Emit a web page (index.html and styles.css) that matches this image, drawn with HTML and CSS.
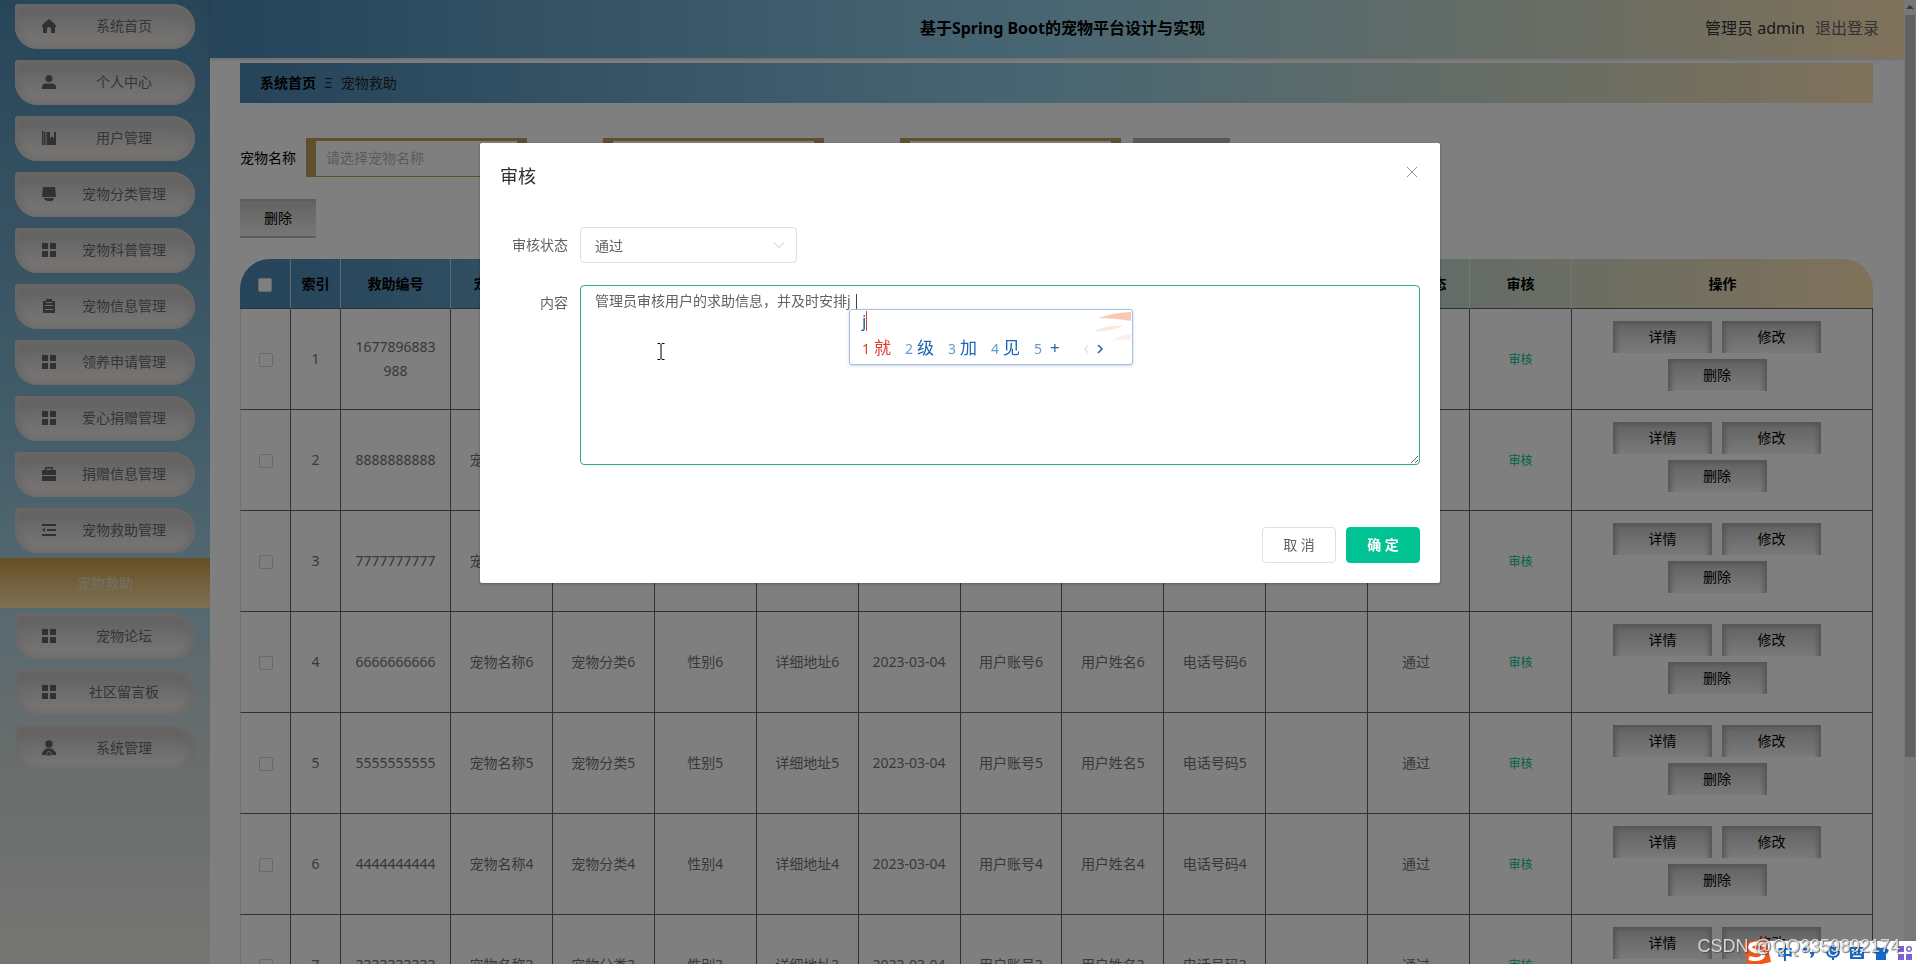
FILE: index.html
```html
<!DOCTYPE html>
<html lang="zh-CN">
<head>
<meta charset="utf-8">
<title>基于Spring Boot的宠物平台设计与实现</title>
<link rel="stylesheet" href="styles.css">
</head>
<body>
<svg class="defs" aria-hidden="true">
  <symbol id="i-home" viewBox="0 0 16 16"><path d="M8 1 14 6v1h1v2h-1v6h-4v-4a2 2 0 0 0-4 0v4H2V9H1V7h1V6z"/></symbol>
  <symbol id="i-user" viewBox="0 0 16 16"><circle cx="8" cy="4.500" r="3.500"/><path d="M1 15v-2q0-3.500 4-3.500h6q4 0 4 3.500v2z"/></symbol>
  <symbol id="i-book" viewBox="0 0 16 16"><path d="M1 1h1.500v14H1zM3 2h1.500v13H3zM5.500 2H9v6l2-1.500L13 8V2h2v13H5.500z"/></symbol>
  <symbol id="i-screen" viewBox="0 0 16 16"><path d="M2 1h12l1 10H1zM3 12h10v1l-2 2H6l-3-2z"/></symbol>
  <symbol id="i-grid" viewBox="0 0 16 16"><path d="M1 1h6v6H1zM9 1h6v6H9zM1 9h6v6H1zM9 9h6v6H9z"/></symbol>
  <symbol id="i-clip" viewBox="0 0 16 16"><path fill-rule="evenodd" d="M5 1h6v2h3v12H2V3h3zM5 4v1h6V4zM4 7v1h8V7zM4 11v1h8v-1z"/></symbol>
  <symbol id="i-case" viewBox="0 0 16 16"><path fill-rule="evenodd" d="M4 4V1h8v3h3v5H1V4zM5.500 4h5V2.500h-5zM1 10h14v5H1z"/></symbol>
  <symbol id="i-list" viewBox="0 0 16 16"><path d="M1 2h14v2H1zM6 7h9v2H6zM1 12h14v2H1zM1 8l3-2v4z"/></symbol>
  <symbol id="i-admin" viewBox="0 0 16 16"><circle cx="8" cy="4" r="3.700"/><path d="M5 8.500h6l4 4V15h-4l-2-4H7l-2 4H1v-2.500z"/><path d="M8 11l2.500 4.500h-5z"/></symbol>
</svg>
<div class="app">
  <nav class="side" id="side"></nav>
  <div class="page">
    <header class="top">
      <h1>基于Spring Boot的宠物平台设计与实现</h1>
      <div class="account"><span>管理员 admin</span><a href="#">退出登录</a></div>
    </header>
    <main class="main">
      <div class="crumb"><b>系统首页</b><span>Ξ</span><span>宠物救助</span></div>
      <form class="filters">
        <div class="filter"><label for="f1">宠物名称</label><input id="f1" placeholder="请选择宠物名称"></div>
        <div class="filter"><label for="f2">用户账号</label><input id="f2"></div>
        <div class="filter"><label for="f3">审核状态</label><input id="f3"></div>
        <button type="button" class="btn query">查询</button>
      </form>
      <button type="button" class="btn remove">删除</button>
      <table class="grid">
        <colgroup><col class="c-s"><col class="c-i"><col class="c-n"><col><col><col><col><col><col><col><col><col><col><col><col class="c-op"></colgroup>
        <thead><tr><th><input type="checkbox" aria-label="全选"></th><th>索引</th><th>救助编号</th><th>宠物名称</th><th>宠物分类</th><th>性别</th><th>详细地址</th><th>救助时间</th><th>用户账号</th><th>用户姓名</th><th>电话号码</th><th>审核回复</th><th>审核状态</th><th>审核</th><th>操作</th></tr></thead>
        <tbody id="rows"></tbody>
      </table>
    </main>
  </div>
  <div class="scroll"><i class="up"></i><i class="thumb"></i></div>
</div>

<div class="mask">
  <section class="dialog" role="dialog" aria-labelledby="dt">
    <div class="dhead"><h2 id="dt">审核</h2><button type="button" class="close" aria-label="关闭"><svg viewBox="0 0 12 12"><path d="M1 1 11 11M11 1 1 11"/></svg></button></div>
    <form class="dform">
      <label for="state">审核状态</label>
      <div class="pick"><select id="state"><option>通过</option></select><svg viewBox="0 0 12 8"><path d="M1 1.500 6 6.500 11 1.500"/></svg></div>
      <label for="content">内容</label>
      <textarea id="content">管理员审核用户的求助信息，并及时安排j</textarea>
    </form>
    <div class="dfoot"><button type="button" class="cancel">取 消</button><button type="button" class="ok">确 定</button></div>
    <i class="caret"></i>
    <div class="ime">
      <div class="typed">j</div>
      <div class="cands"><span class="hot"><i>1</i>就</span><span><i>2</i>级</span><span><i>3</i>加</span><span><i>4</i>见</span><span><i class="wide">5</i>+</span><svg class="pager" viewBox="0 0 20 10"><path class="off" d="M4 1 1 5l3 4"/><path d="M14 1l4 4-4 4"/></svg></div>
      <svg class="plume" viewBox="0 0 44 34"><path d="M10 8q18-6 33-6v9q-16-3-33-3z" fill="#f9c9b8"/><path d="M6 21q14-6 28-5-10 6-28 5z" fill="#fbe6e0"/><path d="M24 30q10-6 19-6v6z" fill="#fdf0ec"/></svg>
    </div>
    <svg class="ibeam" viewBox="0 0 8 17"><path d="M.5.500h2.500l1 1 1-1h2.500M4 1.500v14M.5 16.500H3l1-1 1 1h2.500"/></svg>
  </section>
</div>

<div class="tray">
  <svg class="sogou" viewBox="0 0 28 28"><path d="M0 6 23 1l5 24L5 30z" fill="#f1561d"/><path d="M22 8q-9-3-14 0-3 4 4 6 9 1 8 5-3 5-14 2" fill="none" stroke="#fff" stroke-width="4"/></svg>
  <span class="zh">中</span>
  <svg viewBox="0 0 16 16"><circle cx="4" cy="5" r="2.500"/><path d="M9 7h4q1 4-3 6l-1-1q2-1 1-3H9z"/></svg>
  <svg viewBox="0 0 16 16"><rect x="5" y="0" width="6" height="10" rx="3"/><path d="M2 6q0 6 6 6t6-6M8 12v3" fill="none" stroke="#1668c9" stroke-width="2"/></svg>
  <svg viewBox="0 0 16 16"><path fill-rule="evenodd" d="M1 2h14v12H1zM3 4v1.500h2V4zM7 4v1.500h2V4zM11 4v1.500h2V4zM3 7v1.500h2V7zM7 7v1.500h2V7zM11 7v1.500h2V7zM4 10.500V12h8v-1.500z"/></svg>
  <svg viewBox="0 0 16 16"><path d="M5 2q3 2 6 0l5 3-2 4-1-1v7H3V8L2 9 0 5z"/></svg>
  <svg class="apps" viewBox="0 0 16 16"><path d="M1 1h6v6H1zM1 9h6v6H1zM9 9h6v6H9z"/><circle cx="12" cy="4" r="2.300" fill="none" stroke="#7b62d9" stroke-width="1.500"/></svg>
</div>
<div class="mark">CSDN @QQ3359892174</div>
<script src="app.js"></script>
</body>
</html>
```
FILE: styles.css
```css
* { box-sizing: border-box; }
body { margin: 0; height: 100vh; overflow: hidden; background: #fff; color: #606266; font: 14px/24px "Noto Sans", "Noto Sans CJK SC", sans-serif; }
button, input, select, textarea { font: inherit; color: inherit; }
h1, h2 { margin: 0; }
.defs { display: none; }
.app { display: flex; height: 100vh; overflow: hidden; }

.side { flex: 0 0 210px; padding-top: 4px; background: linear-gradient(180deg, #508cb4 0%, #87bcd4 45%, #a8d0e2 60%, #d4dcda 80%, #ecebe8 100%); }
.item { display: flex; align-items: center; width: 180px; height: 45px; margin: 0 15px 11px; padding: 0 0 2px 26px; border-radius: 4px 24px 24px 24px; background: linear-gradient(180deg, #c6c4c4, #f2f0ee); box-shadow: inset 0 0 6px 3px #d8d2ce, inset 0 8px 12px #c0bebd; color: #6a6a6c; text-decoration: none; }
.item svg { width: 16px; height: 16px; fill: #606266; }
.item span { flex: 1; padding-right: 4px; text-align: center; }
.active { display: flex; align-items: center; justify-content: center; height: 50px; margin: -6px 0 6px; background: linear-gradient(180deg, #cc9e46, #ffe4ae); color: #e8e0d0; text-decoration: none; }

.page { flex: 1; min-width: 0; }
.top { display: grid; grid-template-columns: 1fr auto 1fr; align-items: center; height: 58px; padding: 0 25px 2px 36px; background: linear-gradient(90deg, #4c88b4, #92cee6 50%, #ffe4b5); box-shadow: 0 1px 4px rgba(0,0,0,.2); }
.top h1 { grid-column: 2; color: #000; font-size: 16px; }
.account { display: flex; gap: 10px; justify-content: flex-end; font-size: 16px; color: #333; }
.account a { color: #666; text-decoration: none; }
.main { padding: 5px 31px 0 30px; }
.crumb { display: flex; gap: 8px; align-items: center; height: 40px; padding: 0 20px; background: linear-gradient(90deg, #4c88b4, #92cee6 50%, #ffe4b5); color: #222; }
.crumb b { color: #000; }
.filters { display: flex; gap: 10px; margin-top: 35px; color: #000; }
.filter { display: flex; align-items: center; gap: 10px; }
.filter input { width: 221px; height: 39px; padding: 0 10px 2px; border: solid #bf9f5c; border-width: 3px 10px 1px; background: #fff; outline: 0; }
.filter input::placeholder { color: #b4b6bc; }
.btn { padding: 0; border: 0; color: #000; background: linear-gradient(180deg, #c4c4c4, #f4f4f4); }
.query { width: 97px; height: 39px; margin-left: 2px; background: linear-gradient(180deg, #aaa, #eee 20px); }
.remove { display: block; width: 76px; height: 39px; margin: 22px 0 21px; padding-bottom: 2px; border: solid #bdbdbd; border-width: 2px 0; background: linear-gradient(180deg, #c8c8c8, #ededed); }

.grid { width: 100%; table-layout: fixed; border-collapse: separate; border-spacing: 0; text-align: center; }
.c-s { width: 51px; }
.c-i { width: 50px; }
.c-n { width: 110px; }
.c-op { width: 301px; }
.grid thead tr { background: linear-gradient(90deg, #4c88b4, #92cee6 50%, #ffe4b5); }
.grid thead { clip-path: inset(0 round 30px 30px 0 0); }
.grid th { height: 50px; padding: 0; color: #000; border-right: 1px solid rgba(255,255,255,.6); border-bottom: 1px solid #606070; }
.grid th:last-child { border-right: 0; }
.grid td { height: 101px; padding: 0 11px; word-break: break-all; border-right: 1px solid #606066; border-bottom: 1px solid #606066; color: #707276; }
.grid td:first-child { border-left: 1px solid #e4e4ea; padding: 0; }
.grid td:nth-child(13) { padding-right: 16px; }
.grid input { appearance: none; display: inline-block; width: 14px; height: 14px; margin: 0; border: 1px solid #d0d2d8; border-radius: 2px; background: #fff; vertical-align: middle; }
.grid a { color: #00c292; font-size: 12px; text-decoration: none; }
.ops { display: flex; flex-wrap: wrap; justify-content: center; }
.ops button { width: 99px; height: 32px; margin: 0 10px 6px 0; box-shadow: inset 6px 4px 5px -3px #aaa, inset -6px 4px 5px -3px #aaa; }

.scroll { flex: 0 0 12px; background: #f1f1f1; padding: 3px 1px 0; }
.up { display: block; width: 0; margin: 2px auto 6px; border: solid transparent; border-width: 0 4px 4px; border-bottom-color: #777; }
.thumb { display: block; height: 742px; background: #c1c1c1; }

.mask { position: fixed; inset: 0; background: rgba(0,0,0,.5); }
.dialog { position: relative; width: 960px; max-width: 75%; margin: 143px 0 0 calc(25% + 1px); border-radius: 2px; background: #fff; box-shadow: 0 1px 3px rgba(0,0,0,.3); }
.dhead { display: flex; justify-content: space-between; padding: 21px 20px 9px; }
.dhead h2 { color: #303133; font-size: 18px; font-weight: 400; line-height: 24px; }
.close { width: 16px; height: 16px; padding: 2px; border: 0; background: none; }
.close svg { display: block; width: 12px; height: 12px; fill: none; stroke: #909399; }
.dform { display: grid; grid-template-columns: 68px 1fr; gap: 22px 12px; padding: 30px 20px; line-height: 36px; }
.dform label { text-align: right; }
.pick { position: relative; width: 217px; height: 36px; }
.pick select { width: 100%; height: 36px; padding: 0 14px 2px; border: 1px solid #dcdfe6; border-radius: 4px; appearance: none; background: #fff; }
.pick svg { position: absolute; right: 12px; top: 14px; width: 12px; height: 8px; fill: none; stroke: #c0c4cc; }
textarea { display: block; width: 100%; height: 180px; padding: 4px 14px; border: 1px solid #2fa98c; border-radius: 4px; outline: 0; line-height: 21px; resize: vertical; }
.dfoot { display: flex; justify-content: flex-end; gap: 10px; padding: 32px 20px 20px; }
.dfoot button { width: 74px; height: 36px; padding: 0; border: 1px solid #dcdfe6; border-radius: 4px; background: #fff; }
.dfoot .ok { border-color: #00c292; background: #00c292; color: #fff; font-weight: 700; }

.caret { position: absolute; left: 376px; top: 151px; width: 1px; height: 15px; background: #444; }
.ime { position: absolute; left: 369px; top: 166px; width: 284px; height: 56px; padding: 0 12px; border: 1px solid #a9bfe0; border-radius: 3px; background: #fff; color: #1b66b5; box-shadow: 0 1px 3px rgba(80,110,170,.3); }
.typed { width: 5px; height: 20px; margin-top: 1px; border-right: 1px solid #e23c2c; font-size: 17px; line-height: 20px; }
.cands { display: flex; align-items: center; gap: 14px; margin-top: 4px; font-size: 17px; line-height: 26px; }
.cands i { margin-right: 4px; font-style: normal; font-size: 14px; color: #6a9aca; }
.cands i.wide { margin-right: 8px; }
.cands .hot, .cands .hot i { color: #e23c2c; }
.pager { width: 20px; height: 10px; margin-left: 10px; fill: none; stroke: #1b66b5; stroke-width: 1.5; }
.pager .off { stroke: #dde6f2; }
.plume { position: absolute; right: 0; top: 0; width: 44px; height: 34px; }
.ibeam { position: absolute; left: 177px; top: 200px; width: 8px; height: 17px; fill: none; stroke: #000; }

.tray { position: fixed; right: 0; bottom: 0; display: flex; align-items: center; gap: 8px; height: 23px; padding-right: 3px; background: #fff; color: #1668c9; }
.tray svg { width: 16px; height: 16px; fill: #1668c9; }
.tray .sogou { width: 28px; height: 28px; margin: -4px -2px 0 -16px; }
.tray .zh { width: 16px; font-weight: 700; font-size: 16px; }
.tray .apps { fill: #7b62d9; }
.mark { position: fixed; right: 16px; bottom: 6px; color: rgba(225,225,225,.9); font: 18px/24px "Liberation Sans", sans-serif; text-shadow: 1px 1px 1px rgba(70,70,70,.8); }
```
FILE: app.js
```js
const menu = [
  ['home', '系统首页'], ['user', '个人中心'], ['book', '用户管理'], ['screen', '宠物分类管理'],
  ['grid', '宠物科普管理'], ['clip', '宠物信息管理'], ['grid', '领养申请管理'], ['grid', '爱心捐赠管理'],
  ['case', '捐赠信息管理'], ['list', '宠物救助管理'], [null, '宠物救助'], ['grid', '宠物论坛'],
  ['grid', '社区留言板'], ['admin', '系统管理']
];
document.getElementById('side').innerHTML = menu.map(([icon, text]) => icon
  ? `<a class="item" href="#"><svg><use href="#i-${icon}"/></svg><span>${text}</span></a>`
  : `<a class="active" href="#">${text}</a>`).join('');

const rows = [['1677896883988', '小狗', '狗', '公', '某小区', '2023-03-04', '1', '张三', '13800000000', '', '通过']];
for (let n = 8; n > 2; n--) {
  rows.push([String(n).repeat(10), '宠物名称' + n, '宠物分类' + n, '性别' + n, '详细地址' + n, '2023-03-04',
    '用户账号' + n, '用户姓名' + n, '电话号码' + n, '', '通过']);
}
document.getElementById('rows').innerHTML = rows.map((r, i) =>
  `<tr><td><input type="checkbox" aria-label="选择第${i + 1}行"></td><td>${i + 1}</td>` +
  r.map(c => `<td>${c}</td>`).join('') +
  '<td><a href="#">审核</a></td><td><div class="ops"><button class="btn">详情</button><button class="btn">修改</button><button class="btn">删除</button></div></td></tr>'
).join('');
```
